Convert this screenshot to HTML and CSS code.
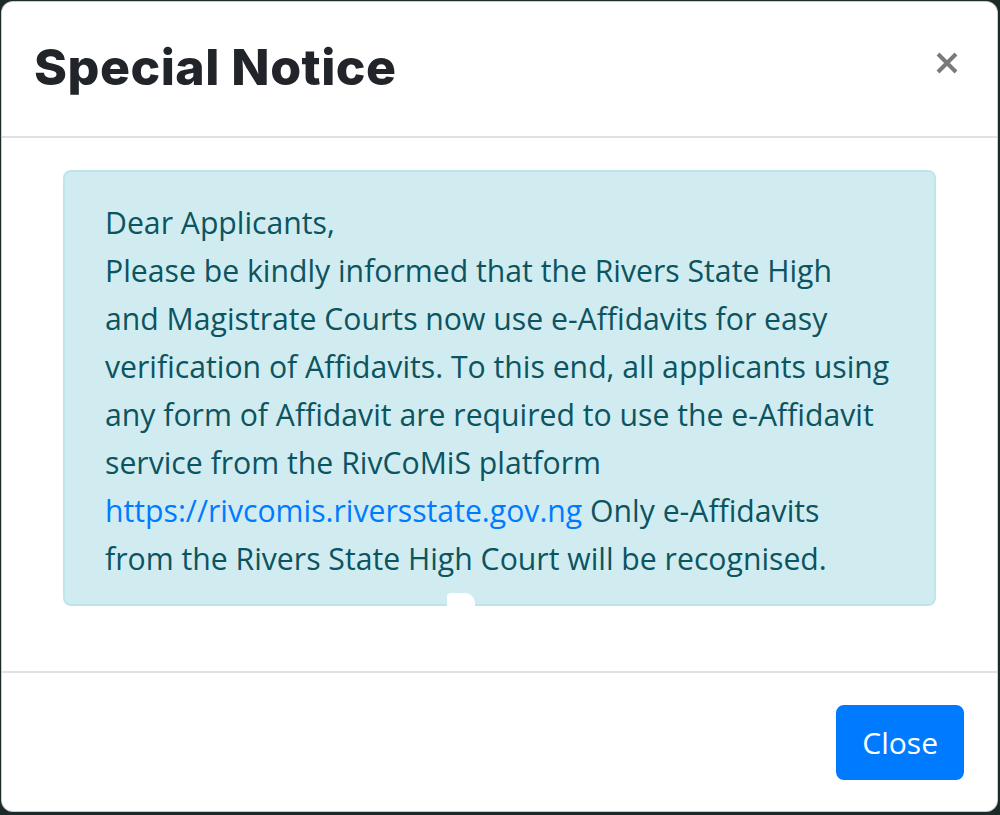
FILE: index.html
```html
<!DOCTYPE html>
<html lang="en">
<head>
    <meta charset="UTF-8">
    <meta name="viewport" content="width=device-width, initial-scale=1.0">
    <title>Special Notice</title>
    <link rel="stylesheet" href="styles.css">
</head>
<body>
    <div class="modal-content">
        <div class="modal-header">
            <h5 class="modal-title">Special Notice</h5>
            <button type="button" class="close" aria-label="Close">
                <svg width="24" height="22" viewBox="0 0 24 22">
                    <path d="M3 2 L21 20 M21 2 L3 20" stroke="currentColor" stroke-width="4" fill="none"/>
                </svg>
            </button>
        </div>

        <div class="modal-body">
            <div class="alert alert-info">
                Dear Applicants,<br>
                Please be kindly informed that the Rivers State High<br>
                and Magistrate Courts now use e-Affidavits for easy<br>
                verification of Affidavits. To this end, all applicants using<br>
                any form of Affidavit are required to use the e-Affidavit<br>
                service from the RivCoMiS platform<br>
                <a href="https://rivcomis.riversstate.gov.ng">https://rivcomis.riversstate.gov.ng</a> Only e-Affidavits<br>
                from the Rivers State High Court will be recognised.
                <span class="speck"></span>
            </div>
        </div>

        <div class="modal-footer">
            <button type="button" class="btn btn-primary">Close</button>
        </div>
    </div>
</body>
</html>
```

FILE: styles.css
```css
* {
    box-sizing: border-box;
}

body {
    margin: 0;
    background-color: #1c2b2a;
    font-family: 'Open Sans', 'Noto Sans', sans-serif;
    height: 815px;
    overflow: hidden;
}

.modal-content {
    margin: 1px 2px 3px 1px;
    height: 811px;
    background-color: #ffffff;
    border: 1px solid rgba(0, 0, 0, 0.2);
    border-radius: 12px;
    display: flex;
    flex-direction: column;
}

.modal-header {
    height: 137px;
    padding: 0 32px;
    display: flex;
    align-items: center;
    justify-content: space-between;
    border-bottom: 2px solid #dee2e6;
}

.modal-title {
    margin: -5px 0 0;
    font-family: 'Inter', sans-serif;
    font-weight: 800;
    font-size: 50px;
    color: #212529;
    letter-spacing: 0.5px;
}

.close {
    background: none;
    border: none;
    padding: 0;
    margin-right: 6px;
    margin-top: -13px;
    color: #7a7a7a;
    display: flex;
    cursor: pointer;
}

.modal-body {
    padding: 32px 32px 65px;
    flex: 1;
}

.alert {
    position: relative;
    margin: 0 29px;
    padding: 27px 40px 21px;
    border: 2px solid #bee5eb;
    border-radius: 8px;
    font-size: 30.2px;
    line-height: 48px;
}

.alert-info {
    color: #0c5460;
    background-color: #d1ecf1;
}

.alert a {
    color: #007bff;
    text-decoration: none;
}

.speck {
    position: absolute;
    left: 382px;
    bottom: -3px;
    width: 28px;
    height: 14px;
    background: #ffffff;
    border-radius: 4px 10px 0 0;
}

.modal-footer {
    padding: 24px 25px 23px 24px;
    display: flex;
    justify-content: flex-end;
    border-top: 2px solid #dee2e6;
}

.btn {
    margin: 8px;
    padding: 12px 24px;
    border: 2px solid transparent;
    border-radius: 8px;
    font-family: inherit;
    font-size: 30px;
    line-height: 47px;
    cursor: pointer;
}

.btn-primary {
    color: #ffffff;
    background-color: #007bff;
    border-color: #007bff;
}
```
